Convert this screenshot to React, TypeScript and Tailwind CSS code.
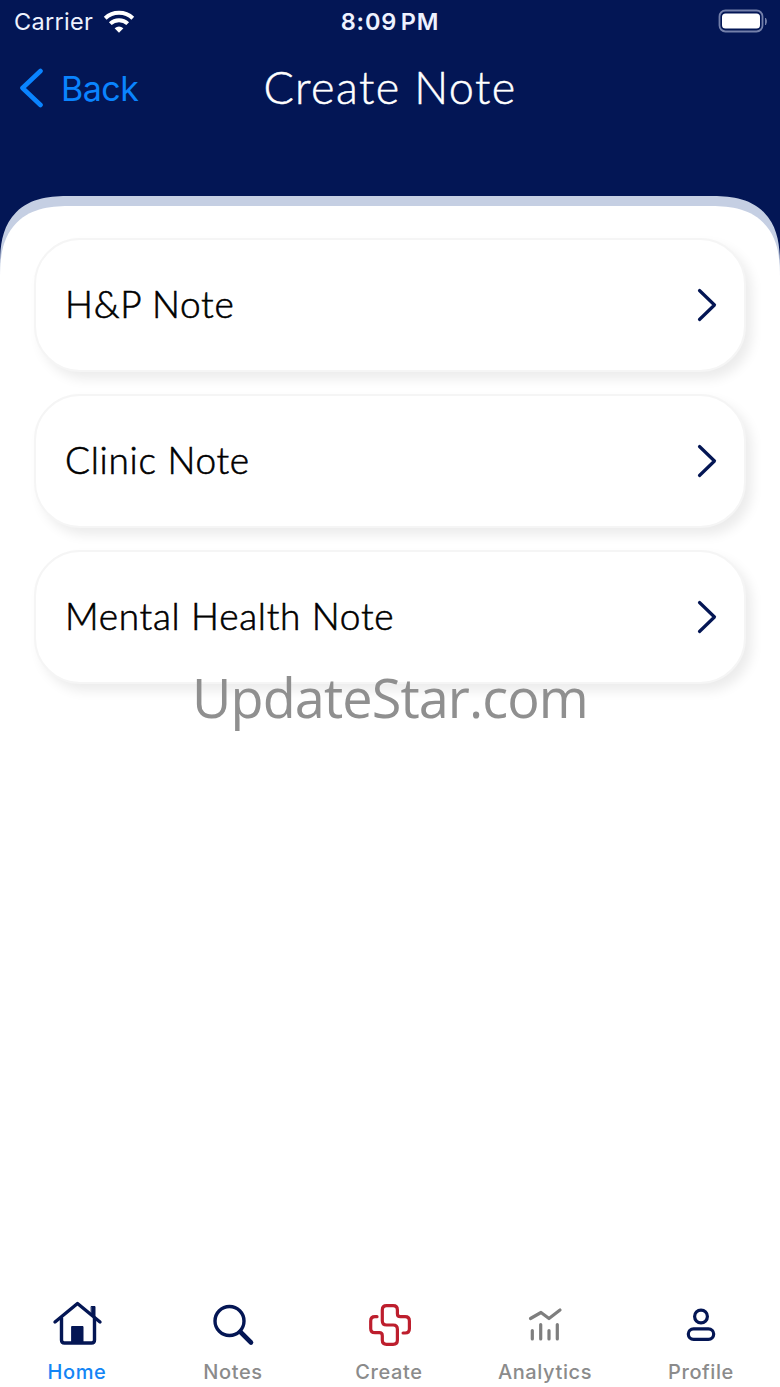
import type { ReactNode } from "react";

const notes = ["H&P Note", "Clinic Note", "Mental Health Note"];

interface TabProps {
  label: string;
  active?: boolean;
  children: ReactNode;
}

function Tab({ label, active, children }: TabProps) {
  return (
    <button className="flex w-[156px] flex-col items-center">
      <svg
        width="56"
        height="56"
        viewBox="0 0 56 56"
        fill="none"
        strokeLinecap="round"
        strokeLinejoin="round"
      >
        {children}
      </svg>
      <span
        className={`mt-1.5 mr-0.5 text-[20px] leading-7 font-medium tracking-[0.6px] ${
          active ? "text-[#1485f5]" : "text-[#8b8b8b]"
        }`}
      >
        {label}
      </span>
    </button>
  );
}

function StatusBar() {
  return (
    <div className="flex h-11 items-center justify-between pr-3 pl-3.5 text-[#eef2ff]">
      <div className="flex w-[240px] items-center gap-2.5">
        <span className="text-[23.5px] tracking-[0.3px]">Carrier</span>
        <svg width="32" height="24" viewBox="0 0 32 24" fill="none" stroke="white" strokeWidth="4">
          <path d="M2.2 8.2C9.8 1 22.2 1 29.8 8.2" />
          <path d="M7.3 13.6C12 9.2 20 9.2 24.7 13.6" />
          <path d="M11.6 18.3Q16 14.6 20.4 18.3L16 22.8Z" fill="white" stroke="none" />
        </svg>
      </div>
      <span className="mr-0.5 text-[23.5px] font-semibold tracking-[0.8px] [word-spacing:-3px]">
        8:09 PM
      </span>
      <div className="flex w-[240px] items-center justify-end">
        <svg width="50" height="24" viewBox="0 0 50 24" fill="none" className="-mt-0.5">
          <rect x="1.5" y="1.5" width="43" height="21" rx="6" stroke="#7480aa" strokeWidth="1.8" />
          <rect x="4" y="4.5" width="38" height="15" rx="3.5" fill="white" />
          <path d="M47.5 9q2 3 0 7z" fill="#7480aa" stroke="#7480aa" />
        </svg>
      </div>
    </div>
  );
}

function Header() {
  return (
    <header className="flex h-[88px] items-center justify-between pr-5 pl-[18px]">
      <button className="flex w-[200px] items-center gap-[17px] text-[#0a84ff]">
        <svg width="26" height="40" viewBox="0 0 26 40" fill="none" stroke="currentColor" strokeWidth="4.6" strokeLinecap="round" strokeLinejoin="round">
          <path d="M22.5 3L4.5 20l18 17" />
        </svg>
        <span className="text-[34px] tracking-[-0.5px]">Back</span>
      </button>
      <h1 className="-mt-px font-['Lato',sans-serif] text-[45px] font-light tracking-[1.4px] text-white [-webkit-text-stroke:0.5px_white]">
        Create Note
      </h1>
      <div className="w-[198px]" />
    </header>
  );
}

function NoteCard({ title }: { title: string }) {
  return (
    <button className="flex h-[134px] w-full items-center justify-between rounded-[46px] border-2 border-[#f5f5f5] bg-white pr-[27px] pl-[29px] shadow-[6px_7px_12px_rgba(0,0,0,0.08)]">
      <span className="-mt-[3px] font-['Lato',sans-serif] text-[37px] font-light tracking-[0.7px] text-black [-webkit-text-stroke:0.6px_black]">
        {title}
      </span>
      <svg width="20" height="34" viewBox="0 0 20 34" fill="none" stroke="#041654" strokeWidth="3.2" strokeLinecap="round" strokeLinejoin="round">
        <path d="M2.5 2.5L17.5 17L2.5 31.5" />
      </svg>
    </button>
  );
}

export default function App() {
  return (
    <div className="flex h-[1387px] w-[780px] flex-col overflow-hidden bg-[linear-gradient(#031655_300px,#fff_300px)] font-['Inter',sans-serif]">
      <StatusBar />
      <Header />
      <main className="mt-16 flex flex-1 flex-col rounded-t-[70px] bg-[#c5cfe3] pt-2.5 [corner-shape:superellipse(1.4)]">
        <div className="flex flex-1 flex-col rounded-t-[72px] bg-white [corner-shape:superellipse(1.4)]">
          <section className="flex flex-col gap-[22px] px-[34px] pt-8">
            {notes.map((note) => (
              <NoteCard key={note} title={note} />
            ))}
          </section>
          <p className="relative -mt-[21px] text-center font-['Open_Sans',sans-serif] text-[54px] leading-[68px] tracking-[-0.9px] text-[#8f8f8f]">
            UpdateStar.com
          </p>
          <nav className="mt-auto flex h-[91px] items-start">
            <Tab label="Home" active>
              <path d="M5 26L27.5 7.500L50 26" stroke="#041654" strokeWidth="3.4" />
              <path d="M11.5 22v22q0 3 3 3h27q3 0 3-3V22" stroke="#041654" strokeWidth="3.4" />
              <path d="M22 30.5h11v16H22zM41.500 10.5h3.5v10l-3.5-3z" fill="#041654" stroke="#041654" />
            </Tab>
            <Tab label="Notes">
              <circle cx="23.5" cy="25" r="14.5" stroke="#041654" strokeWidth="3.4" />
              <path d="M34.5 36l10.5 10.5" stroke="#041654" strokeWidth="4.6" />
            </Tab>
            <Tab label="Create">
              <path
                d="M15 20.7h-2q-4.3 0-4.3 4.3v7.4q0 4.3 4.3 4.3h4.3q3 0 3 3v4.4q0 4.3 4.3 4.3h6.5q4.3 0 4.3-4.3V33.3q0-4.3-4.3-4.3h-6.5q-4.3 0-4.3-4.3V13.9q0-4.3 4.3-4.3h6.5q4.3 0 4.3 4.3v3.8q0 3 3 3h4.7q4.3 0 4.3 4.3v7.7q0 4.3-4.3 4.3h-2"
                stroke="#bd1e2d"
                strokeWidth="3.2"
              />
            </Tab>
            <Tab label="Analytics">
              <path
                d="M12.5 22.5l10.5-6 8 6 11-8.5M14.3 34.5v8.5M22.7 28.5v14.5M31 34.5v8.5M39.3 28.5v14.5"
                stroke="#7e7e7e"
                strokeWidth="3.2"
              />
            </Tab>
            <Tab label="Profile">
              <circle cx="27" cy="20.5" r="6.4" stroke="#041654" strokeWidth="3.2" />
              <rect x="14.3" y="32.8" width="25.4" height="10.6" rx="5.3" stroke="#041654" strokeWidth="3.2" />
            </Tab>
          </nav>
        </div>
      </main>
    </div>
  );
}
